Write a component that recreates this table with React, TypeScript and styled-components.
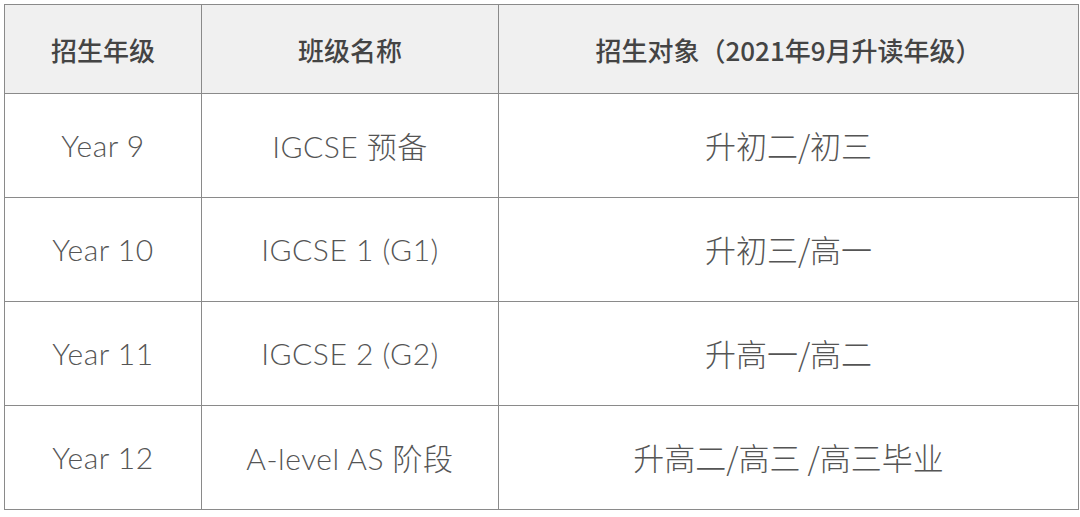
import React from 'react';
import styled, { createGlobalStyle } from 'styled-components';

const GlobalStyle = createGlobalStyle`
  html, body {
    margin: 0;
    padding: 0;
    background: #ffffff;
  }
`;

const Page = styled.div`
  width: 1080px;
  height: 517px;
  padding: 4px 5px 0 4px;
  box-sizing: border-box;
  background: #ffffff;
`;

const Table = styled.table`
  width: 1071px;
  border-collapse: collapse;
  table-layout: fixed;
  border: 1.5px solid #8a8a8a;
`;

const HeadCell = styled.th<{ width: number }>`
  width: ${props => props.width}px;
  height: 88px;
  padding: 0;
  background: #f0f0f0;
  border: 1.5px solid #8a8a8a;
  color: #444444;
  font-family: 'Noto Sans CJK SC', 'Noto Sans', sans-serif;
  font-weight: 500;
  font-size: 26px;
  text-align: center;
  vertical-align: middle;
`;

const Cell = styled.td`
  height: 101px;
  padding: 0 0 2px 0;
  border: 1.5px solid #8a8a8a;
  color: #555555;
  font-family: 'Lato', 'Noto Sans CJK SC', sans-serif;
  font-weight: 300;
  font-size: 30px;
  letter-spacing: 0.5px;
  text-align: center;
  vertical-align: middle;
`;

const TargetCell = styled(Cell)`
  font-family: 'Noto Sans CJK SC', sans-serif;
  font-weight: 300;
  font-size: 31px;
  letter-spacing: 0;
`;

const rows = [
  { grade: 'Year 9', name: 'IGCSE 预备', target: '升初二/初三' },
  { grade: 'Year 10', name: 'IGCSE 1 (G1)', target: '升初三/高一' },
  { grade: 'Year 11', name: 'IGCSE 2 (G2)', target: '升高一/高二' },
  { grade: 'Year 12', name: 'A-level AS 阶段', target: '升高二/高三 /高三毕业' },
];

const App: React.FC = () => {
  return (
    <Page>
      <GlobalStyle />
      <Table>
        <thead>
          <tr>
            <HeadCell width={196}>招生年级</HeadCell>
            <HeadCell width={296}>班级名称</HeadCell>
            <HeadCell width={579}>招生对象（2021年9月升读年级）</HeadCell>
          </tr>
        </thead>
        <tbody>
          {rows.map(row => (
            <tr key={row.grade}>
              <Cell>{row.grade}</Cell>
              <Cell>{row.name}</Cell>
              <TargetCell>{row.target}</TargetCell>
            </tr>
          ))}
        </tbody>
      </Table>
    </Page>
  );
};

export default App;
